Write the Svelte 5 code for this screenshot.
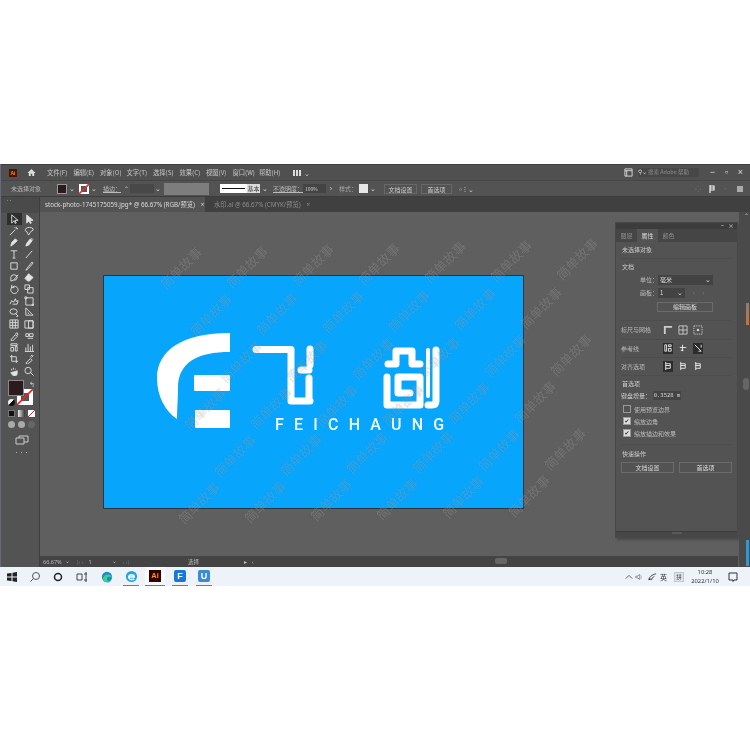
<script>
  const menus = ['文件(F)','编辑(E)','对象(O)','文字(T)','选择(S)','效果(C)','视图(V)','窗口(W)','帮助(H)'];
  const tools = [
    'M3 1v9l2.5-2.5L7 10.5l1-.5-1.5-3H10z','M3 1v9l2.5-2.5L7 10.5l1-.5-1.5-3H10z',
    'M1 10 7 4M8 1v2M10 3H8M7 1 6 2','M2 3c2-2 6-2 8 0 1 3-3 2-3 4l-2 3-2-4C1 6 1 4 2 3z',
    'M2 10 3 6l4-4 2 2-4 4z','M2 10 3 7l4-5 2 2-4 5zM8 1l2 2',
    'M2 2h7M5.5 2v8M4 10h3','M2 10 9 2',
    'M2 2h7v7H2z','M2 10C3 8 6 5 9 1l1 1C8 5 5 8 3 10z',
    'M2 6a3.5 3 0 1 1 3 3L2 10zM5 9l5-6','M1 7l4-5 5 4-4 4H4z',
    'M3 3 2 6a4 4 0 1 0 2-3M3 1v3h3','M4 4h6v6H4zM1 1h5v5H1z',
    'M1 9 3 5l2 2 2-4 1 3 2-1-1 4H4','M2 2h8v8H2zM1 1h2v2H1zM9 9h2v2H9z',
    'M1 5a4 3 0 0 1 8 0 4 3 0 0 1-8 0zM7 7l3 3-2 .5','M2 1 10 9H2zM4 6l2 2',
    'M1 1h9v9H1zM1 4h9M1 7h9M4 1v9M7 1v9','M1 2h9v8H1zM5 2h5v8H5z',
    'M2 10 7 4l2 2-5 5zM7 3l2-1 1 2-2 1','M2 3h3v3H2zM6 3h4v3H6zM4 8h6',
    'M2 2h7v2H2zM2 6h3v4H2zM7 5h2v5H7z','M2 10V6M4.5 10V2M7 10V5M9.5 10V3M1 10.5h10',
    'M3 1v7h7M1 3h7v7','M2 10 7 5l2 2-5 4zM7 3l2-2 1 1-2 2',
    'M3 5V3M5 4V2M7 4V3M9 5v3c0 2-1 3-3 3S3 9 2 7','M1 5a3.5 3.5 0 1 0 7 0 3.5 3.5 0 0 0-7 0zM7 7l3.5 3.5'
  ];
  const waterA = [];
  for (let r = 0; r < 6; r++) for (let c = 0; c < 7; c++) {
    const x = 180 + 66 * c + (r * 30) % 66, y = 268 - 1.5 * c + 47 * r;
    if (x < 590 && y < 530) waterA.push({ x, y });
  }
  const bars = [
    'M2 2h2v7H2zM6 2h3v2H6zM6 6h3v3H6z','M2 5h7M5 2v7M3 8h3','M2 2l7 7M9 2v3M6 9h3'
  ];
</script>

<div class="page">
  <div class="app">
    <header class="menubar">
      <span class="ai-logo">Ai</span>
      <svg class="home" viewBox="0 0 10 10"><path d="M5 1 .5 5.5H2V9h2.2V6.4h1.6V9H8V5.5h1.5z"/></svg>
      <nav class="menus">
        {#each menus as m}<span>{m}</span>{/each}
        <span class="arrange"><i></i><b>⌄</b></span>
      </nav>
      <div class="win-right">
        <svg class="frame" viewBox="0 0 10 10"><path d="M1 1h8v8H1zM1 3h8M3 3v6" fill="none" stroke="#ddd"/></svg>
        <div class="search"><span class="mag">⚲⌄</span><span>搜索 Adobe 帮助</span></div>
        <div class="winbtns"><span>−</span><span>▫</span><span>×</span></div>
      </div>
    </header>

    <div class="controlbar">
      <span class="no-sel">未选择对象</span>
      <span class="swatch fill"></span><b class="caret">⌄</b>
      <svg class="swatch stroke" viewBox="0 0 10 10"><rect width="10" height="10" fill="#fff"/><rect x="2" y="2" width="6" height="6" fill="#555"/><path d="M0 10 10 0" stroke="#e23030" stroke-width="1.6"/></svg><b class="caret">⌄</b>
      <span class="link stroke-l">描边：</span>
      <span class="spin">⌃</span>
      <span class="dark-field"></span><b class="caret small-gap">⌄</b>
      <span class="grey-field"></span>
      <span class="stroke-line"><i></i></span><span class="basic">基本</span><b class="caret">⌄</b>
      <span class="link opacity">不透明度：</span>
      <span class="opval">100%</span><b class="caret right">›</b>
      <span class="style-l">样式：</span>
      <span class="style-box"></span><b class="caret">⌄</b>
      <span class="ctl-btn first">文档设置</span>
      <span class="ctl-btn">首选项</span>
      <span class="arr-ico">▫⁝ ⌄</span>
      <span class="ctl-right">
        <i class="dots">⁘</i>
        <svg viewBox="0 0 10 10"><path d="M2 1v8M2 2h4v2H2M2 6h4V4" fill="none" stroke="#eee" stroke-width="1.2"/></svg>
        <i class="dash">−</i>
        <i class="sq"></i>
      </span>
    </div>

    <div class="workspace">
      <aside class="toolbar">
        <div class="grip">‥</div>
        <div class="tools">
          {#each tools as d, i}
            <span class="tool" class:active={i === 0}>
              <svg viewBox="0 0 11 11"><path {d} class:solid={i === 1 || i === 4 || i === 5 || i === 11 || i === 26}/></svg>
            </span>
          {/each}
        </div>
        <div class="colors">
          <span class="big-fill"></span>
          <svg class="big-stroke" viewBox="0 0 16 16"><rect width="16" height="16" fill="#fff"/><rect x="4" y="4" width="8" height="8" fill="#555"/><path d="M0 16 16 0" stroke="#e22" stroke-width="1.6"/></svg>
          <span class="swap">↰</span>
          <span class="mini"></span>
        </div>
        <div class="modes">
          <i class="m1"></i><i class="m2"></i><i class="m3"></i>
        </div>
        <div class="draws">
          <i></i><i></i><i class="off"></i>
        </div>
        <svg class="screen" viewBox="0 0 14 10"><path d="M1 3h8v6H1zM4 3V1h9v6H9" fill="none" stroke="#ccc"/></svg>
        <div class="more">•••</div>
      </aside>

      <div class="doc">
        <div class="tabs">
          <div class="tab active">stock-photo-1745175059.jpg* @ 66.67% (RGB/预览)<b>×</b></div>
          <div class="tab">水印.ai @ 66.67% (CMYK/预览)<b>×</b></div>
        </div>
        <div class="canvas-row">
          <main class="canvas">
            <section class="artboard">
              <svg class="logo" viewBox="0 0 320 120">
                <g transform="translate(-140 -320)">
                  <path class="w" d="M230 333v19c-32 0-52 10-52 36 0 10-1 21-1 31-12-8-20-23-20-41 0-28 26-45 73-45z"/>
                  <rect class="w" x="194" y="375" width="36" height="16" rx="1"/>
                  <rect class="w" x="195" y="410" width="35" height="18" rx="1"/>
                  <g class="ln">
                    <path d="M256 349.500H291V401H310"/>
                    <path d="M310 349V365"/>
                    <path d="M301 370H309"/>
                    <path d="M309 378V398"/>
                    <path d="M388 364H396V351H412V364H420"/>
                    <path d="M387 377V405H420V377H398V393H410"/>
                    <path class="thin" d="M428 350V396"/>
                    <path d="M436 350V401Q436 405 432 405H428"/>
                  </g>
                </g>
              </svg>
              <div class="wordmark">FEICHAUNG</div>
            </section>
          </main>
          <aside class="panel">
            <div class="panel-top"><span>−</span><span>×</span></div>
            <div class="panel-tabs">
              <span>图层</span><span class="on">属性</span><span>颜色</span>
            </div>
            <div class="p-body">
              <p class="p-title">未选择对象</p>
              <hr />
              <p class="p-h">文档</p>
              <div class="p-row unit"><span class="lab">单位：</span><span class="select wide">毫米<b>⌄</b></span></div>
              <div class="p-row board"><span class="lab">画板：</span><span class="select short">1<b>⌄</b></span><em>‹ ›</em></div>
              <span class="edit-btn">编辑画板</span>
              <hr class="s2" />
              <div class="icon-row grid-row"><span class="l">标尺与网格</span>
                <svg viewBox="0 0 11 11"><path d="M1 10V1h9v2H3v7z" fill="#ccc"/></svg>
                <svg viewBox="0 0 11 11"><path d="M1 1h9v9H1zM1 5.500h9M5.500 1v9" fill="none" stroke="#ccc"/></svg>
                <svg viewBox="0 0 11 11"><path d="M1 1h9v9H1z" fill="none" stroke="#ccc" stroke-dasharray="1.500 1"/><circle cx="5.500" cy="5.500" r="1.500" fill="#ccc"/></svg>
              </div>
              <hr />
              <div class="icon-row"><span class="l">参考线</span>
                {#each bars as d, i}
                  <span class="ibox" class:dark={i !== 1}><svg viewBox="0 0 11 11"><path {d} fill="none" stroke="#eee"/></svg></span>
                {/each}
              </div>
              <hr />
              <div class="icon-row"><span class="l">对齐选项</span>
                {#each [0, 1, 2] as i}
                  <span class="ibox" class:dark={i === 0}><svg viewBox="0 0 11 11"><path d="M3 1v9M3 3h5v2H3M3 8h5V5" fill="none" stroke="#eee"/></svg></span>
                {/each}
              </div>
              <hr />
              <p class="p-h pref">首选项</p>
              <div class="p-row inc"><span>键盘增量：</span><span class="input">0.3528 m</span></div>
              <div class="check"><i></i>使用预览边界</div>
              <div class="check"><i class="on">✔</i>缩放边角</div>
              <div class="check"><i class="on">✔</i>缩放描边和效果</div>
              <hr class="s3" />
              <p class="p-h quick">快速操作</p>
              <div class="p-btns"><span>文档设置</span><span>首选项</span></div>
            </div>
            <div class="panel-foot"><i></i></div>
          </aside>
          <div class="v-scroll">
            <span class="arrow-up">⌃</span>
            <i class="mark-o"></i><i class="thumb"></i><i class="mark-b"></i>
          </div>
        </div>
        <footer class="status">
          <span class="zoomv">66.67%</span><b>⌄</b>
          <span class="nav">|‹ ‹</span><span class="num">1</span><b class="n2">⌄</b><span class="nav">› ›|</span>
          <span class="sel">选择</span><span class="tri">▸</span>
          <span class="hthumb"></span><span class="lt">‹</span>
        </footer>
      </div>
    </div>
    <div class="marks" aria-hidden="true">
      {#each waterA as w}
        <span style="left:{w.x}px;top:{w.y}px">简单故事</span>
      {/each}
    </div>
  </div>

  <footer class="taskbar">
    <svg class="t-ico" style="--x:6px" viewBox="0 0 12 12"><path d="M1 2.500 5.500 2v3.500H1zM6.500 1.800 11 1v4.500H6.500zM1 6.500h4.500V10L1 9.500zM6.500 6.500H11V11l-4.500-.8z" fill="#222"/></svg>
    <svg class="t-ico" style="--x:11px" viewBox="0 0 12 12"><circle cx="7" cy="5" r="3.500" fill="none" stroke="#555"/><path d="M4.500 7.500 1.500 10.500" stroke="#555"/></svg>
    <svg class="t-ico" style="--x:11px" viewBox="0 0 12 12"><circle cx="6" cy="6" r="3.500" fill="none" stroke="#222" stroke-width="1.500"/></svg>
    <svg class="t-ico" style="--x:12px" viewBox="0 0 12 12"><path d="M1 3h5v6H1zM8 3h3M8 9h3M10 1v10" fill="none" stroke="#444"/></svg>
    <svg class="t-ico" style="--x:13px" viewBox="0 0 14 14"><circle cx="7" cy="7" r="6" fill="#1c89c9"/><path d="M2 9c1-6 10-7 11-1-2-2-6-2-6 1s3 4 5 3c-4 3-9 1-10-3z" fill="#3bd08f"/></svg>
    <span class="app-i" style="--x:10px"><svg viewBox="0 0 14 14"><circle cx="7" cy="7" r="6" fill="#1fa4e4"/><path d="M4 7.500h6C10 4.500 4.500 4 4 7.500c0 3 3.500 3.500 6 2" fill="none" stroke="#fff" stroke-width="1.600"/></svg></span>
    <span class="app-i ai" style="--x:6px"><b>Ai</b></span>
    <span class="app-i" style="--x:7px"><span class="sq-f">F</span></span>
    <span class="app-i" style="--x:8px"><span class="sq-u">U</span></span>
    <div class="tray">
      <svg class="tray-up" viewBox="0 0 10 10"><path d="M1 7 5 3l4 4" fill="none" stroke="#444"/></svg>
      <svg class="spk" viewBox="0 0 10 10"><path d="M1 4h2l3-2v6L3 6H1z" fill="none" stroke="#777"/><path d="M8 3v4" stroke="#bbb"/></svg>
      <svg class="net" viewBox="0 0 10 10"><path d="M1 9c0-3 3-6 8-7M4 9c0-2 1-3 3-4" fill="none" stroke="#333"/><circle cx="2" cy="8" r="1" fill="#333"/></svg>
      <span class="tr">英</span>
      <span class="pin">拼</span>
      <div class="clock"><span>10:28</span><span>2022/1/10</span></div>
      <svg class="note" viewBox="0 0 10 10"><path d="M1 1h8v7H6L5 9.500V8H1z" fill="none" stroke="#333"/></svg>
    </div>
  </footer>
</div>

<style>
  :global(body) { margin: 0; background: #fff; }
  .page { width: 750px; height: 750px; padding-top: 164px; box-sizing: border-box; background: #fff; overflow: hidden; font-family: "Noto Sans CJK SC", "Liberation Sans", sans-serif; filter: blur(0.35px); }
  .app { position: relative; height: 403px; display: flex; flex-direction: column; background: #535353; color: #ccc; font-size: 6px; border-left: 1px solid #666a80; box-sizing: border-box; }
  b { font-weight: 400; }

  .menubar { height: 16px; flex: none; display: flex; align-items: center; background: #505050; border-top: 1px solid #3e3e3e; box-sizing: border-box; }
  .ai-logo { width: 8px; height: 8px; margin-left: 8px; background: #4a1408; color: #ff9a00; font: 700 5px/8px "Liberation Sans", sans-serif; text-align: center; }
  .home { width: 9px; height: 9px; margin-left: 10px; fill: #ddd; }
  .menus { display: flex; margin-left: 11px; }
  .menus span { width: 26.500px; white-space: nowrap; font-size: 6.300px; color: #c8c8c8; }
  .menus .arrange { display: flex; align-items: center; gap: 3px; margin-left: 7px; }
  .arrange i { width: 8px; height: 6px; background: repeating-linear-gradient(90deg, #ddd 0 2px, #505050 2px 3px); }
  .arrange b { font-size: 7px; line-height: 6px; }
  .win-right { margin-left: auto; display: flex; align-items: center; }
  .frame { width: 9px; height: 9px; }
  .search { width: 61px; height: 9px; margin-left: 5px; background: #474747; color: #8c8c8c; font-size: 5.500px; line-height: 9px; display: flex; gap: 1px; white-space: nowrap; }
  .mag { color: #ddd; }
  .winbtns { display: flex; gap: 5px; margin: 0 5px 0 9px; color: #ddd; font: 9px/9px "Liberation Sans", sans-serif; }
  .winbtns span { width: 9px; text-align: center; }

  .controlbar { height: 17px; flex: none; display: flex; align-items: center; background: #535353; border-top: 1px solid #464646; border-bottom: 1px solid #3c3c3c; box-sizing: border-box; white-space: nowrap; }
  .no-sel { margin-left: 10px; width: 45px; color: #b4b4b4; }
  .swatch { width: 10px; height: 10px; flex: none; box-sizing: border-box; }
  .swatch.fill { background: #2a1c1c; border: 1px solid #999; margin-left: 1px; }
  .caret { width: 8px; margin-left: 1px; text-align: center; font: 7px/6px "Liberation Sans", sans-serif; color: #ddd; }
  .swatch.stroke { margin-left: 3px; }
  .link { text-decoration: underline; color: #bbb; }
  .stroke-l { margin-left: 5px; width: 19px; }
  .spin { width: 8px; text-align: center; }
  .dark-field { width: 24px; height: 9px; background: #484848; }
  .small-gap { margin-left: 0; margin-right: 2px; }
  .grey-field { width: 45px; height: 12px; margin-left: 0; background: #7d7d7d; }
  .stroke-line { width: 27px; height: 9px; margin-left: 11px; background: #fff; display: flex; align-items: center; justify-content: center; }
  .stroke-line i { width: 23px; height: 1px; background: #111; }
  .basic { width: 13px; height: 9px; background: #ddd; color: #333; line-height: 9px; text-align: center; }
  .opacity { margin-left: 4px; width: 30px; }
  .opval { width: 23px; height: 9px; background: #444; line-height: 9px; font-size: 5px; padding-left: 2px; box-sizing: border-box; }
  .right { margin-left: 2px; width: 6px; }
  .style-l { margin-left: 5px; width: 20px; color: #aaa; }
  .style-box { width: 9px; height: 9px; background: #e8e8e8; }
  .ctl-btn { height: 10px; line-height: 9px; border: 1px solid #676767; box-sizing: border-box; text-align: center; width: 31px; margin-left: 4px; }
  .ctl-btn.first { margin-left: 7px; width: 33px; }
  .arr-ico { margin-left: 5px; color: #ccc; font-size: 7px; }
  .ctl-right { margin-left: auto; display: flex; align-items: center; gap: 6px; margin-right: 7px; }
  .ctl-right svg { width: 10px; height: 10px; }
  .ctl-right i { font-style: normal; }
  .dots { color: #777; font-size: 8px; }
  .dash { color: #777; }
  .sq { width: 6px; height: 6px; background: #aaa; margin-left: 4px; }

  .workspace { flex: 1; min-height: 0; display: flex; }
  .toolbar { width: 39px; flex: none; background: #535353; border-right: 1px solid #3e3e3e; display: flex; flex-direction: column; align-items: center; box-sizing: border-box; padding-left: 3px; }
  .grip { height: 16px; width: calc(100% + 3px); margin-left: -3px; background: #4a4a4a; line-height: 8px; padding-left: 5px; box-sizing: border-box; }
  .tools { display: grid; grid-template-columns: 15px 15px; grid-auto-rows: 11.700px; margin-top: 0; }
  .tool { display: flex; align-items: center; justify-content: center; position: relative; }
  .tool.active { background: #2f2f2f; }
  .tool svg { width: 10px; height: 10px; fill: none; stroke: #e0e0e0; stroke-width: 1; }
  .tool svg :global(.solid) { fill: #e4e4e4; }
  .colors { position: relative; width: 27px; height: 27px; margin-top: 3px; }
  .big-fill { position: absolute; left: 0; top: 0; width: 16px; height: 16px; background: #2a1c1c; border: 1px solid #888; box-sizing: border-box; z-index: 1; }
  .big-stroke { position: absolute; left: 9px; top: 9px; width: 16px; height: 16px; z-index: 0; }
  .swap { position: absolute; right: 0; top: 1px; font-size: 7px; line-height: 7px; color: #ddd; }
  .mini { position: absolute; left: 0; top: 19px; width: 7px; height: 7px; background: linear-gradient(135deg, #eee 50%, #111 50%); border-radius: 50%; }
  .modes, .draws { display: flex; gap: 3px; margin-top: 3px; }
  .modes i, .draws i { width: 7px; height: 7px; display: block; box-sizing: border-box; }
  .m1 { background: #111; border: 1px solid #777; }
  .m2 { background: linear-gradient(90deg, #eee, #333); }
  .m3 { background: linear-gradient(135deg, #fff 45%, #e22 45% 55%, #fff 55%); }
  .draws { margin-top: 4px; }
  .draws i { background: #aaa; border-radius: 50%; }
  .draws i.off { background: #666; }
  .screen { width: 14px; height: 10px; margin-top: 7px; }
  .more { margin-top: 4px; font-size: 5px; line-height: 6px; letter-spacing: 0; }

  .doc { flex: 1; min-width: 0; display: flex; flex-direction: column; background: #5f5f5f; }
  .tabs { height: 15px; flex: none; display: flex; background: #404040; }
  .tab { display: flex; align-items: center; gap: 6px; padding: 0 5px; font: 6.250px "Noto Sans", "Noto Sans CJK SC", sans-serif; color: #8d8d8d; white-space: nowrap; }
  .tab.active { background: #535353; color: #ddd; width: 165px; box-sizing: border-box; justify-content: space-between; margin-right: 4px; }
  .canvas-row { flex: 1; min-height: 0; display: flex; }
  .canvas { flex: 1; min-width: 0; padding: 64px 0 0 64px; box-sizing: border-box; }
  .artboard { position: relative; width: 419px; height: 232px; background: #08a5fc; outline: 1px solid #2c3640; overflow: hidden; }
  .logo { position: absolute; left: 36px; top: 44px; width: 320px; height: 120px; }
  .w { fill: #fff; }
  .ln { fill: none; stroke: #fff; stroke-width: 7; stroke-linecap: round; stroke-linejoin: round; }
  .ln .thin { stroke-width: 4; }
  .wordmark { position: absolute; left: 171px; top: 139px; font: 500 16px/20px Roboto, "Liberation Sans", sans-serif; letter-spacing: 10.200px; color: #f4fbff; white-space: nowrap; }

  .panel { width: 123px; height: 316px; flex: none; margin-top: 10px; background: #535353; border: 1px solid #484848; box-sizing: border-box; display: flex; flex-direction: column; box-shadow: 2px 2px 2px #4a4a4a; }
  .panel-top { height: 6px; background: #3c3c3c; display: flex; justify-content: flex-end; gap: 4px; padding-right: 3px; line-height: 6px; color: #ddd; font-size: 6px; }
  .panel-tabs { height: 13px; display: flex; background: #454545; }
  .panel-tabs span { width: 21px; text-align: center; line-height: 13px; color: #8e8e8e; }
  .panel-tabs .on { background: #535353; color: #ddd; }
  .p-body { flex: 1; padding: 0 5px; display: flex; flex-direction: column; }
  .p-body p { margin: 0; }
  .p-title { margin-top: 1px !important; line-height: 12px; height: 12px; padding-top: 1px; padding-left: 1px; }
  hr { width: 100%; margin: 2px 0 0; border: 0; border-top: 1px solid #4d4d4d; }
  .p-h { padding-left: 1px; line-height: 10px; margin-top: 3px !important; }
  .p-row { display: flex; align-items: center; }
  .lab { width: 37px; text-align: right; color: #bbb; }
  .unit { margin-top: 2px; height: 11px; }
  .board { margin-top: 2px; height: 11px; }
  .select { height: 10px; background: #434343; display: flex; justify-content: space-between; align-items: center; padding: 0 2px; box-sizing: border-box; color: #ddd; }
  .wide { width: 55px; }
  .short { width: 27px; }
  .select b { font: 7px/6px "Liberation Sans", sans-serif; }
  .p-row em { margin-left: 8px; font-style: normal; color: #888; letter-spacing: 3px; }
  .edit-btn { margin: 4px 0 0 36px; width: 56px; height: 10px; line-height: 8px; text-align: center; border: 1px solid #6b6b6b; box-sizing: border-box; color: #ddd; }
  .s2 { margin-top: 8px; }
  .icon-row { height: 16px; display: flex; align-items: center; gap: 5px; margin-top: 0; }
  .icon-row .l { width: 37px; color: #bbb; }
  .icon-row svg { width: 10px; height: 10px; }
  .grid-row { height: 17px; }
  .ibox { width: 10px; height: 11px; display: flex; align-items: center; justify-content: center; }
  .ibox.dark { background: #2d2d2d; }
  .icon-row + hr { margin-top: 1px; }
  .pref { margin-top: 3px !important; }
  .inc { margin-top: 1px; margin-bottom: 2px; height: 10px; gap: 0; }
  .inc span:first-child { width: 32px; }
  .input { width: 28px; height: 9px; background: #444; font: 5.500px/9px "DejaVu Sans Mono", monospace; color: #ddd; text-align: center; }
  .check { display: flex; align-items: center; gap: 3px; margin: 2px 0 0 2px; height: 10px; color: #bbb; }
  .check i { width: 6px; height: 6px; border: 1px solid #999; font: 700 6px/6px "DejaVu Sans", sans-serif; color: #333; text-align: center; }
  .check i.on { background: #ddd; }
  .s3 { margin-top: 6px; }
  .quick { margin-top: 4px !important; }
  .p-btns { display: flex; gap: 5px; margin-top: 3px; }
  .p-btns span { width: 53px; height: 11px; border: 1px solid #6b6b6b; box-sizing: border-box; text-align: center; line-height: 9px; color: #ddd; }
  .panel-foot { height: 5px; background: #474747; border-top: 1px solid #3c3c3c; display: flex; justify-content: center; }
  .panel-foot i { width: 10px; height: 2px; background: #5a5a5a; }

  .v-scroll { width: 11px; flex: none; background: #4a4a4a; margin-left: 1px; position: relative; }
  .arrow-up { position: absolute; right: 1px; top: 0; line-height: 8px; }
  .v-scroll i { position: absolute; display: block; }
  .mark-o { right: 1px; top: 91px; width: 3px; height: 22px; background: linear-gradient(#8a7d74, #d2703a); }
  .thumb { right: 1px; top: 166px; width: 6px; height: 12px; background: #666; border-radius: 3px; }
  .mark-b { right: 1px; top: 328px; width: 3px; height: 26px; background: #2a9bd4; }

  .status { height: 11px; flex: none; margin-top: -11px; position: relative; display: flex; align-items: center; background: #444; color: #bbb; white-space: nowrap; font: 5.500px "Noto Sans", "Noto Sans CJK SC", sans-serif; padding-left: 3px; margin-right: 12px; }
  .status > b { width: 8px; text-align: center; margin-left: 2px; line-height: 5px; }
  .nav { margin-left: 4px; color: #777; }
  .num { margin-left: 5px; width: 20px; }
  .sel { position: absolute; left: 148px; font-family: "Noto Sans CJK SC", sans-serif; }
  .tri { position: absolute; left: 204px; }
  .hthumb { position: absolute; left: 455px; top: 2px; width: 12px; height: 6px; background: #666; border-radius: 2px; }
  .lt { position: absolute; left: 212px; }

  .marks { position: absolute; left: 0; top: -164px; width: 750px; height: 567px; overflow: hidden; pointer-events: none; }
  .marks span { position: absolute; font: 13px/14px "Noto Sans CJK SC", sans-serif; color: rgba(255, 255, 255, 0.2); text-shadow: 0 0 1px rgba(0, 0, 0, 0.18); transform: translate(-50%, -50%) rotate(-45deg); white-space: nowrap; }

  .taskbar { height: 19px; position: relative; display: flex; align-items: center; background: #eef2f9; }
  .t-ico { width: 12px; height: 12px; margin-left: var(--x); flex: none; }
  .app-i { position: relative; width: 16px; height: 19px; margin-left: var(--x); display: flex; align-items: center; justify-content: center; border-bottom: 1.500px solid #2b8fd8; box-sizing: border-box; flex: none; }
  .app-i svg { width: 13px; height: 13px; }
  .ai b { width: 12px; height: 12px; background: #330000; color: #ff9a00; font: 700 7.500px/12px "Liberation Sans", sans-serif; text-align: center; }
  .ai { background: #f9fbff; width: 20px; }
  .sq-f, .sq-u { width: 12px; height: 12px; border-radius: 2px; color: #fff; font: 700 9px/12px "Liberation Sans", sans-serif; text-align: center; }
  .sq-f { background: #1678d8; }
  .sq-u { background: #3a8bd6; }
  .tray { margin-left: auto; display: flex; align-items: center; color: #333; font-size: 7px; }
  .tray-up { width: 8px; height: 8px; }
  .spk { width: 8px; height: 8px; margin-left: 2px; }
  .tr { width: 13px; text-align: center; }
  .net { width: 9px; height: 9px; margin: 0 0 0 5px; }
  .pin { width: 8px; height: 8px; margin: 0 0 0 4px; background: #dfe3e8; color: #444; font-size: 5.500px; line-height: 8px; text-align: center; border: 1px solid #c5c9ce; box-sizing: content-box; }
  .clock { width: 38px; margin-left: 2px; display: flex; flex-direction: column; align-items: center; font: 5.800px/8.500px "Noto Sans", sans-serif; color: #333; }
  .note { width: 10px; height: 10px; margin: 0 12px 0 4px; }
</style>
